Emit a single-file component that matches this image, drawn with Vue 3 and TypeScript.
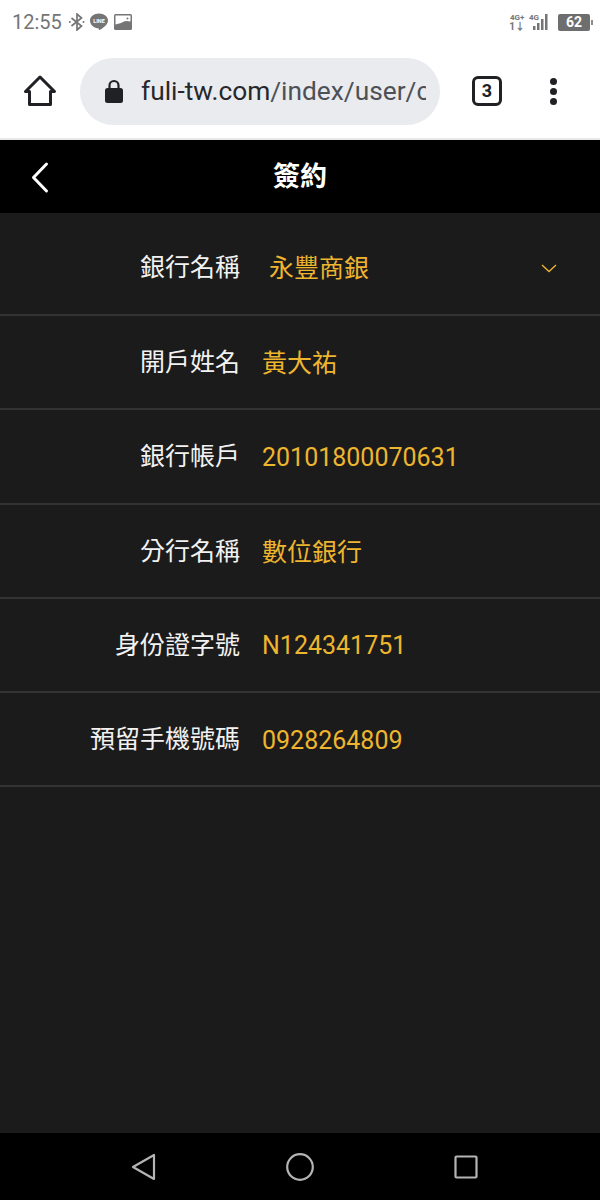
<template>
  <div class="phone">
    <div class="status-bar">
      <div class="status-left">
        <span class="clock">12:55</span>
        <svg class="ic" width="18" height="18" viewBox="0 0 18 18" fill="none" stroke="#757575" stroke-width="1.700">
          <path d="M3.500 5l10 8L9 17V1l4.500 4-10 8" />
          <circle cx="1.800" cy="9" r="1" fill="#757575" stroke="none" />
          <circle cx="15.500" cy="9" r="1" fill="#757575" stroke="none" />
        </svg>
        <svg class="ic" width="20" height="20" viewBox="0 0 20 20">
          <path d="M10 1.500c5 0 9 3 9 7 0 3.800-4.500 7.500-8.500 9.500-.8.300-.7-.7-.6-1.500C5 16 1 13 1 8.500c0-4 4-7 9-7z" fill="#757575" />
          <text x="10" y="10.500" class="line-txt">LINE</text>
        </svg>
        <svg class="ic pic" width="20" height="18" viewBox="0 0 20 18">
          <rect x="1" y="1" width="18" height="16" rx="1.500" fill="#757575" />
          <path d="M2.500 2.500h15v6c-3-.5-5-1-7.500.5S5 10.500 2.500 11.500z" fill="#fff" />
          <circle cx="14.500" cy="5.500" r="1" fill="#757575" />
        </svg>
      </div>
      <div class="status-right">
        <div class="net"><span>4G+</span><span class="arrows">1↓</span></div>
        <div class="net-b">
          <span class="net-label">4G</span>
          <svg width="20" height="17" viewBox="0 0 20 17" fill="#757575">
            <rect x="4" y="12" width="2.500" height="4" />
            <rect x="8" y="9" width="2.500" height="7" />
            <rect x="12" y="5" width="2.500" height="11" />
            <rect x="16" y="0" width="2.500" height="16" />
          </svg>
        </div>
        <div class="battery">62</div>
        <div class="battery-tip"></div>
      </div>
    </div>

    <div class="browser-bar">
      <svg class="home" width="34" height="34" viewBox="0 0 34 34" fill="none" stroke="#202124" stroke-width="3" stroke-linejoin="round">
        <path d="M2.500 17.500L17 3l14.500 14.500h-4v13h-21v-13z" />
      </svg>
      <div class="omnibox">
        <svg class="lock" width="20" height="24" viewBox="0 0 20 24" fill="#202124">
          <path d="M5.500 10V6.500a4.500 4.500 0 0 1 9 0V10" fill="none" stroke="#202124" stroke-width="2.200" />
          <rect x="1" y="9" width="18" height="15" rx="2.500" />
        </svg>
        <span class="url"><span class="domain">fuli-tw.com</span>/index/user/c</span>
      </div>
      <div class="tabs">3</div>
      <div class="menu"><i></i><i></i><i></i></div>
    </div>

    <header class="title-bar">
      <svg class="back" width="20" height="34" viewBox="0 0 20 34" fill="none" stroke="#fff" stroke-width="3" stroke-linecap="round" stroke-linejoin="round">
        <path d="M16.500 3L3.500 16.500l13 13.500" />
      </svg>
      <h1>簽約</h1>
    </header>

    <main class="form">
      <div v-for="row in rows" :key="row.label" class="row" :class="{ first: row.select }">
        <span class="label">{{ row.label }}</span>
        <span class="value" :class="{ latin: row.latin }">{{ row.value }}</span>
        <svg v-if="row.select" class="caret" width="16" height="9" viewBox="0 0 16 9" fill="none" stroke="#eeb52f" stroke-width="1.300">
          <path d="M1 1l7 6.500L15 1" />
        </svg>
      </div>
    </main>

    <nav class="nav-bar">
      <svg width="26" height="28" viewBox="0 0 26 28" fill="none" stroke="#b4b4b4" stroke-width="2.200" stroke-linejoin="round">
        <path d="M23 2v24L2 14z" />
      </svg>
      <svg class="nav-home" width="30" height="30" viewBox="0 0 30 30" fill="none" stroke="#b4b4b4" stroke-width="2.200">
        <circle cx="15" cy="15" r="12.800" />
      </svg>
      <svg class="nav-recent" width="24" height="24" viewBox="0 0 24 24" fill="none" stroke="#b4b4b4" stroke-width="2.200" stroke-linejoin="round">
        <rect x="1.500" y="1.500" width="21" height="21" rx="1" />
      </svg>
    </nav>
  </div>
</template>

<script setup lang="ts">
interface Row {
  label: string
  value: string
  select?: boolean
  latin?: boolean
}

const rows: Row[] = [
  { label: '銀行名稱', value: '永豐商銀', select: true },
  { label: '開戶姓名', value: '黃大祐' },
  { label: '銀行帳戶', value: '20101800070631', latin: true },
  { label: '分行名稱', value: '數位銀行' },
  { label: '身份證字號', value: 'N124341751', latin: true },
  { label: '預留手機號碼', value: '0928264809', latin: true }
]
</script>

<style>
html,
body {
  margin: 0;
  background: #1b1b1b;
}
</style>

<style scoped>
.phone {
  width: 600px;
  height: 1200px;
  display: flex;
  flex-direction: column;
  overflow: hidden;
  font-family: Roboto, 'Noto Sans CJK TC', sans-serif;
}

.status-bar {
  height: 46px;
  flex: none;
  box-sizing: border-box;
  background: #fff;
  display: flex;
  align-items: center;
  justify-content: space-between;
  padding: 0 7px 2px 12px;
  color: #757575;
}

.status-left,
.status-right {
  display: flex;
  align-items: center;
}

.status-left {
  gap: 3px;
}

.clock {
  font-size: 20px;
  margin-right: 3px;
}

.pic {
  margin-left: 1px;
}

.line-txt {
  font-family: Roboto, sans-serif;
  font-size: 5.500px;
  font-weight: 700;
  fill: #fff;
  text-anchor: middle;
}

.net {
  display: flex;
  flex-direction: column;
  align-items: center;
  font-size: 8px;
  font-weight: 700;
  line-height: 9px;
}

.arrows {
  font-size: 10px;
}

.net-b {
  position: relative;
  width: 20px;
  height: 17px;
  margin-left: 4px;
}

.net-label {
  position: absolute;
  left: 0;
  top: -1px;
  font-size: 8px;
  font-weight: 700;
  line-height: 9px;
}

.battery {
  width: 32px;
  height: 17px;
  margin-left: 9px;
  background: #6e6e6e;
  color: #fff;
  border-radius: 2px;
  font-size: 14px;
  font-weight: 700;
  line-height: 17px;
  text-align: center;
}

.battery-tip {
  width: 2px;
  height: 5px;
  margin-left: 1px;
  background: #8a8a8a;
}

.browser-bar {
  height: 94px;
  flex: none;
  box-sizing: border-box;
  background: #fff;
  border-bottom: 2px solid #e8e8e8;
  display: flex;
  align-items: center;
  padding: 0 0 2px 23px;
}

.omnibox {
  width: 360px;
  height: 67px;
  margin-left: 23px;
  flex: none;
  box-sizing: border-box;
  border-radius: 34px;
  background: #e9ebef;
  display: flex;
  align-items: center;
  padding: 0 14px 0 24px;
}

.lock {
  flex: none;
}

.url {
  margin-left: 17px;
  min-width: 0;
  font-size: 26.300px;
  color: #4d5156;
  white-space: nowrap;
  overflow: hidden;
}

.domain {
  color: #27282b;
}

.tabs {
  width: 24px;
  height: 24px;
  margin-left: 32px;
  flex: none;
  border: 3px solid #202124;
  border-radius: 6px;
  font-size: 18px;
  font-weight: 700;
  line-height: 24px;
  text-align: center;
  color: #202124;
}

.menu {
  margin-left: 48px;
  display: flex;
  flex-direction: column;
  gap: 3px;
}

.menu i {
  width: 7px;
  height: 7px;
  border-radius: 50%;
  background: #202124;
}

.title-bar {
  position: relative;
  height: 73px;
  flex: none;
  background: #000;
  display: flex;
  align-items: center;
  justify-content: center;
}

.back {
  position: absolute;
  left: 30px;
  top: 21px;
}

h1 {
  margin: 0;
  padding-bottom: 4px;
  font-size: 27px;
  font-weight: 700;
  color: #fff;
}

.form {
  flex: 1;
  background: #1b1b1b;
}

.row {
  height: 94.25px;
  box-sizing: border-box;
  border-bottom: 2px solid #333;
  display: flex;
  align-items: center;
  padding-right: 43px;
}

.row.first {
  height: 103px;
  padding-top: 6px;
}

.label {
  width: 240px;
  flex: none;
  padding-bottom: 4px;
  text-align: right;
  font-size: 25px;
  color: #f2f2f2;
  white-space: nowrap;
}

.value {
  margin-left: 22px;
  flex: 1;
  padding-bottom: 2px;
  font-size: 25px;
  color: #eeb52f;
}

.value.latin {
  padding: 2px 0 0;
}

.first .value {
  margin-left: 29px;
}

.caret {
  margin-top: 4px;
}

.nav-bar {
  height: 67px;
  flex: none;
  background: #000;
  display: flex;
  align-items: center;
  padding-left: 131px;
}

.nav-home {
  margin-left: 128px;
}

.nav-recent {
  margin-left: 139px;
}
</style>
